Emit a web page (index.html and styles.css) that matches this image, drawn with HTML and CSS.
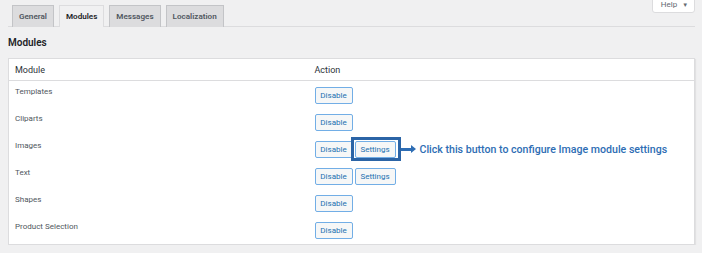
FILE: index.html
```html
<!DOCTYPE html>
<html lang="en">
<head>
  <meta charset="UTF-8">
  <title>Modules</title>
  <link rel="stylesheet" href="styles.css">
</head>
<body>
  <div class="wrap">
    <div class="top-bar">
      <nav class="tabs">
        <a class="tab">General</a>
        <a class="tab active">Modules</a>
        <a class="tab">Messages</a>
        <a class="tab">Localization</a>
      </nav>
      <button class="help-button">Help <span class="caret">▼</span></button>
    </div>

    <h2 class="section-title">Modules</h2>

    <table class="modules-table">
      <thead>
        <tr>
          <th class="col-name">Module</th>
          <th>Action</th>
        </tr>
      </thead>
      <tbody>
        <tr>
          <td class="col-name">Templates</td>
          <td><button class="btn">Disable</button></td>
        </tr>
        <tr>
          <td class="col-name">Cliparts</td>
          <td><button class="btn">Disable</button></td>
        </tr>
        <tr>
          <td class="col-name">Images</td>
          <td>
            <div class="actions">
              <button class="btn">Disable</button>
              <span class="highlight-wrap">
                <button class="btn">Settings</button>
                <span class="highlight"></span>
                <span class="callout">
                  <span class="arrow"></span>
                  Click this button to configure Image module settings
                </span>
              </span>
            </div>
          </td>
        </tr>
        <tr>
          <td class="col-name">Text</td>
          <td>
            <div class="actions">
              <button class="btn">Disable</button>
              <button class="btn">Settings</button>
            </div>
          </td>
        </tr>
        <tr>
          <td class="col-name">Shapes</td>
          <td><button class="btn">Disable</button></td>
        </tr>
        <tr>
          <td class="col-name">Product Selection</td>
          <td><button class="btn">Disable</button></td>
        </tr>
      </tbody>
    </table>
  </div>
</body>
</html>
```

FILE: styles.css
```css
* {
  box-sizing: border-box;
}

body {
  margin: 0;
  padding: 0;
  background: #f0f0f1;
  font-family: Roboto, 'Liberation Sans', sans-serif;
  color: #3c434a;
}

.wrap {
  width: 695px;
  padding-left: 8px;
}

.top-bar {
  display: flex;
  justify-content: space-between;
  align-items: flex-start;
  border-bottom: 1px solid #dcdcde;
  height: 27px;
}

.tabs {
  display: flex;
  gap: 5px;
  padding-left: 4px;
  padding-top: 5px;
}

.tab {
  display: block;
  height: 22px;
  padding: 0 6px;
  line-height: 20px;
  font-size: 8.1px;
  font-weight: 600;
  color: #50575e;
  background: #dcdcde;
  border: 1px solid #c3c4c7;
  border-bottom: none;
}

.tab.active {
  background: #f0f0f1;
  color: #1d2327;
  border-color: #dcdcde;
}

.help-button {
  margin-top: -4px;
  height: 17px;
  width: 43px;
  padding: 0 0 0 2px;
  background: #fff;
  border: 1px solid #dcdcde;
  border-radius: 0 0 3px 3px;
  font-family: inherit;
  font-size: 8px;
  color: #646970;
}

.help-button .caret {
  font-size: 6px;
  margin-left: 3px;
}

.section-title {
  margin: 10px 0 0;
  font-size: 10px;
  font-weight: 600;
  color: #1d2327;
  height: 21px;
  line-height: 12px;
}

.modules-table {
  width: 687px;
  border-collapse: collapse;
  background: #fff;
  border: 1px solid #dcdcde;
  box-shadow: 1px 1px 1px rgba(0, 0, 0, 0.06);
}

.modules-table th {
  text-align: left;
  font-weight: 400;
  font-size: 9px;
  color: #2c3338;
  height: 22px;
  padding: 0 6px;
  border-bottom: 1px solid #dcdcde;
}

.modules-table td {
  height: 27px;
  padding: 5px 6px 4px;
  vertical-align: top;
  font-size: 8px;
  color: #50575e;
}

.modules-table tbody tr:last-child td {
  padding-bottom: 5px;
}

.col-name {
  width: 300px;
}

.modules-table td.col-name {
  padding-top: 6px;
}

.actions {
  display: flex;
  gap: 2px;
}

.btn {
  display: block;
  height: 17px;
  width: 38px;
  padding: 0;
  margin-top: 1px;
  background: #f6f7f7;
  border: 1px solid #72aee6;
  border-radius: 2px;
  font-family: inherit;
  font-size: 8px;
  color: #2271b1;
  line-height: 15px;
}

.highlight-wrap .btn,
.actions .btn + .btn {
  width: 41px;
}

.highlight-wrap {
  position: relative;
}

.highlight {
  position: absolute;
  left: -4px;
  top: -3px;
  width: 50px;
  height: 24px;
  border: 3px solid #2b64a6;
}

.callout {
  position: absolute;
  left: 46px;
  top: 3px;
  display: flex;
  align-items: center;
  white-space: nowrap;
  font-size: 10.6px;
  font-weight: 500;
  color: #2e6db4;
}

.arrow {
  position: relative;
  width: 11px;
  height: 3px;
  margin-right: 8px;
  background: #2e6db4;
}

.arrow::after {
  content: "";
  position: absolute;
  left: 10px;
  top: -3px;
  border-left: 5px solid #2e6db4;
  border-top: 4.5px solid transparent;
  border-bottom: 4.5px solid transparent;
}
```
